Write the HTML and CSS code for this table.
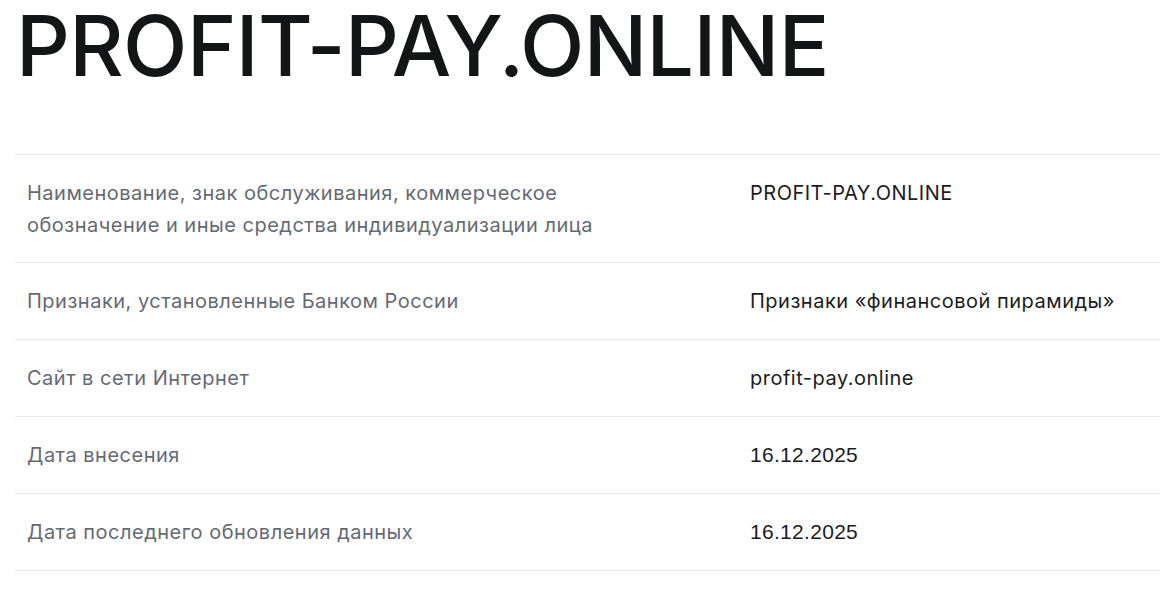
FILE: index.html
```html
<!DOCTYPE html>
<html lang="ru">
<head>
<meta charset="utf-8">
<link rel="stylesheet" href="styles.css">
</head>
<body>
<div class="page">
  <h1 class="title">PROFIT-PAY.ONLINE</h1>
  <div class="table">
    <div class="row row-multi">
      <div class="label">Наименование, знак обслуживания, коммерческое обозначение и иные средства индивидуализации лица</div>
      <div class="value">PROFIT-PAY.ONLINE</div>
    </div>
    <div class="row">
      <div class="label">Признаки, установленные Банком России</div>
      <div class="value">Признаки «финансовой пирамиды»</div>
    </div>
    <div class="row">
      <div class="label">Сайт в сети Интернет</div>
      <div class="value">profit-pay.online</div>
    </div>
    <div class="row">
      <div class="label">Дата внесения</div>
      <div class="value date">16.12.2025</div>
    </div>
    <div class="row">
      <div class="label">Дата последнего обновления данных</div>
      <div class="value date">16.12.2025</div>
    </div>
  </div>
</div>
</body>
</html>
```
FILE: styles.css
```css
html, body {
  margin: 0;
  padding: 0;
  background: #ffffff;
}
.page {
  padding: 0 0 0 15px;
  font-family: "Inter", "Noto Sans", sans-serif;
}
.title {
  margin: 0;
  padding: 1px 0 0 1px;
  height: 154px;
  box-sizing: border-box;
  font-size: 84px;
  line-height: 90px;
  font-weight: 500;
  color: #141517;
  letter-spacing: -0.6px;
}
.table {
  border-top: 1px solid #e6e6e6;
}
.row {
  display: grid;
  grid-template-columns: 723px 1fr;
  border-bottom: 1px solid #e6e6e6;
  padding: 22px 0 22px 12px;
  font-size: 20px;
  line-height: 32px;
  letter-spacing: 0.5px;
}
.row-multi {
  padding-bottom: 21px;
}
.label {
  color: #646a73;
  max-width: 600px;
}
.value {
  color: #1b1c1f;
}
.date {
  font-family: "Liberation Sans", Arial, sans-serif;
  font-size: 21px;
  letter-spacing: 0.3px;
}
```
